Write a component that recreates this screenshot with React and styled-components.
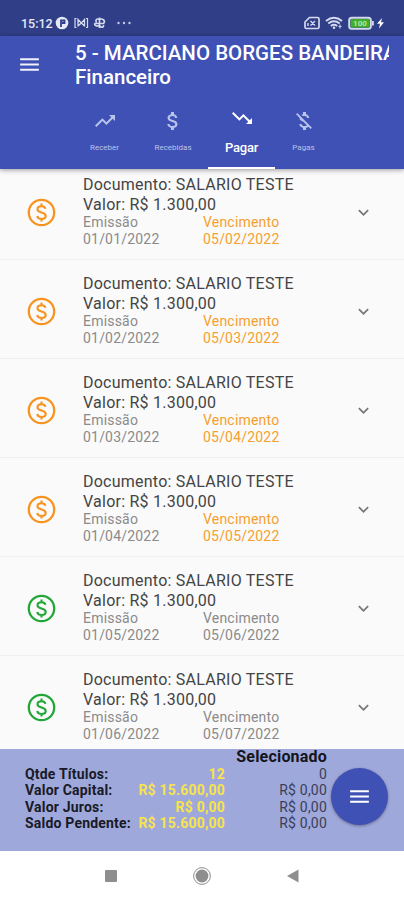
import React from "react"
import styled, { createGlobalStyle } from "styled-components"
import {
  MdAttachMoney,
  MdKeyboardArrowDown,
  MdMenu,
  MdMoneyOff,
  MdTrendingDown,
  MdTrendingUp,
} from "react-icons/md"

const tabs = [
  { label: "Receber", Icon: MdTrendingUp },
  { label: "Recebidas", Icon: MdAttachMoney },
  { label: "Pagar", Icon: MdTrendingDown, active: true },
  { label: "Pagas", Icon: MdMoneyOff },
]

const titulos = [
  { emissao: "01/01/2022", vencimento: "05/02/2022", vencido: true },
  { emissao: "01/02/2022", vencimento: "05/03/2022", vencido: true },
  { emissao: "01/03/2022", vencimento: "05/04/2022", vencido: true },
  { emissao: "01/04/2022", vencimento: "05/05/2022", vencido: true },
  { emissao: "01/05/2022", vencimento: "05/06/2022" },
  { emissao: "01/06/2022", vencimento: "05/07/2022" },
]

const totais = [
  { label: "Qtde Títulos:", total: "12", selecionado: "0" },
  { label: "Valor Capital:", total: "R$ 15.600,00", selecionado: "R$ 0,00" },
  { label: "Valor Juros:", total: "R$ 0,00", selecionado: "R$ 0,00" },
  { label: "Saldo Pendente:", total: "R$ 15.600,00", selecionado: "R$ 0,00" },
]

export default function App() {
  return (
    <Screen>
      <GlobalStyle />
      <StatusBar>
        <StatusGroup>
          <Clock>15:12</Clock>
          <StatusIconsLeft />
        </StatusGroup>
        <StatusIconsRight />
      </StatusBar>
      <Header>
        <TitleRow>
          <MenuButton aria-label="Menu">
            <MdMenu size={25} />
          </MenuButton>
          <Title>
            5 - MARCIANO BORGES BANDEIRA
            <br />
            Financeiro
          </Title>
        </TitleRow>
        <Tabs>
          {tabs.map(({ label, Icon, active }) => (
            <Tab key={label} $active={active}>
              <Icon size={24} />
              <TabLabel $active={active}>{label}</TabLabel>
            </Tab>
          ))}
        </Tabs>
      </Header>
      <List>
        {titulos.map(item => (
          <Row key={item.emissao}>
            <Coin $vencido={item.vencido}>
              <CoinIcon />
            </Coin>
            <Details>
              <Line>Documento: SALARIO TESTE</Line>
              <Line>Valor: R$ 1.300,00</Line>
              <Dates>
                <DateBlock>
                  Emissão
                  <br />
                  {item.emissao}
                </DateBlock>
                <DateBlock $vencido={item.vencido}>
                  Vencimento
                  <br />
                  {item.vencimento}
                </DateBlock>
              </Dates>
            </Details>
            <Expand>
              <MdKeyboardArrowDown size={21} />
            </Expand>
          </Row>
        ))}
      </List>
      <Summary>
        <Totals>
          <SelectedTitle>Selecionado</SelectedTitle>
          {totais.map(item => (
            <React.Fragment key={item.label}>
              <TotalLabel>{item.label}</TotalLabel>
              <TotalValue>{item.total}</TotalValue>
              <SelectedValue>{item.selecionado}</SelectedValue>
            </React.Fragment>
          ))}
        </Totals>
        <Fab aria-label="Opções">
          <MdMenu size={25} />
        </Fab>
      </Summary>
      <NavBar>
        <svg width="14" height="14">
          <rect x="1" y="1" width="12" height="12" rx="1" fill="#8e8e8e" />
        </svg>
        <svg width="20" height="20">
          <circle cx="10" cy="10" r="8.4" fill="none" stroke="#8e8e8e" />
          <circle cx="10" cy="10" r="6.4" fill="#8e8e8e" />
        </svg>
        <svg width="14" height="14">
          <path d="M1 7 12.500 .5V13.500Z" fill="#8e8e8e" />
        </svg>
      </NavBar>
    </Screen>
  )
}

function CoinIcon() {
  return (
    <svg width="33" height="33" fill="none" stroke="currentColor">
      <circle cx="16.500" cy="16.500" r="12.700" strokeWidth="2.300" />
      <path
        d="M20.500 12.800C20 11 18.500 10.200 16.500 10.200C14.200 10.200 12.500 11.200 12.500 13.200C12.500 15.200 14.200 15.900 16.500 16.500C19 17.200 20.700 18 20.700 20C20.700 22 18.900 23 16.600 23C14.200 23 12.600 21.900 12.200 20M16.500 7.500V10.200M16.500 23V25.500"
        strokeWidth="2.100"
      />
    </svg>
  )
}

function StatusIconsLeft() {
  return (
    <svg width="78" height="16" fill="none" stroke="#d5d9ee">
      <circle cx="7" cy="8" r="6.300" fill="#e6e8f6" stroke="none" />
      <path d="M6 12V5.500H9.500V8H7" stroke="#303f8a" strokeWidth="1.800" />
      <path d="M21.500 3.500H20V12.500H21.500M31 3.500H32.500V12.500H31" strokeWidth="1.200" />
      <path d="M23 11.500V4.500L26.300 8 29.500 4.500V11.500M23 11 26.300 8 29.500 11" strokeWidth="1.300" />
      <path
        d="M44.500 2.500V13M44.500 4.500C41.500 3 40 5 41.500 7.500M44.500 4.500C47.500 3 51 5.500 48.500 8.500H39.500M39.500 8.500C39.500 11 42 11.500 44.500 10.500C46 13 49 12.500 48.500 10"
        strokeWidth="1.600"
      />
      <g fill="#c3c9e6" stroke="none">
        <circle cx="63.500" cy="8" r="1.200" />
        <circle cx="69" cy="8" r="1.200" />
        <circle cx="74.500" cy="8" r="1.200" />
      </g>
    </svg>
  )
}

function StatusIconsRight() {
  return (
    <svg width="80" height="16" fill="none">
      <path
        d="M5.500 2.500H13.500Q15 2.500 15 4V12Q15 13.500 13.500 13.500H2.500Q1 13.500 1 12V7Z"
        stroke="#d5d9ee"
        strokeWidth="1.700"
      />
      <path d="M4 8V11M6.500 6 11 10.500M11 6 6.500 10.500" stroke="#d5d9ee" strokeWidth="1.400" />
      <g stroke="#d5d9ee" strokeWidth="1.900">
        <path d="M22 6Q30 -.5 38 6" />
        <path d="M24.300 8.500Q30 4 35.700 8.500" />
        <path d="M26.800 11Q30 8.600 33.200 11" />
      </g>
      <circle cx="30" cy="12.800" r="1.300" fill="#d5d9ee" />
      <path d="M36 9.500V13.500M34.500 11.500H37.500" stroke="#d5d9ee" />
      <rect x="45.200" y="2.700" width="21.600" height="11" rx="2.500" stroke="#d5d9ee" strokeWidth="2" />
      <rect x="46.500" y="4" width="19" height="8.400" rx="1" fill="#3fae2c" />
      <rect x="68" y="6" width="1.800" height="4.500" fill="#d5d9ee" />
      <text x="56" y="11" textAnchor="middle" fill="#b5e5a8" fontSize="8" fontWeight="700">
        100
      </text>
      <path d="M78 3 73 8.800H76L75 13.500 80 7.300H77Z" fill="#fff" />
    </svg>
  )
}

const GlobalStyle = createGlobalStyle`
  * {
    box-sizing: border-box;
  }

  body {
    margin: 0;
    background: #ffffff;
    font-family: Roboto, "Liberation Sans", sans-serif;
  }

  button {
    border: 0;
    padding: 0;
    font: inherit;
  }

  svg {
    display: block;
    flex-shrink: 0;
  }
`

const Screen = styled.div`
  display: flex;
  flex-direction: column;
  width: 404px;
  height: 900px;
  overflow: hidden;
`

const StatusBar = styled.div`
  display: flex;
  justify-content: space-between;
  height: 36px;
  flex-shrink: 0;
  padding: 15px 20px 0 21px;
  background: #303e87;
  color: #e6e8f6;
`

const StatusGroup = styled.div`
  display: flex;
  gap: 2px;
`

const Clock = styled.span`
  width: 32px;
  font-size: 12.5px;
  font-weight: 500;
  line-height: 17px;
  white-space: nowrap;
`

const Header = styled.header`
  display: flex;
  flex-direction: column;
  justify-content: space-between;
  height: 133px;
  flex-shrink: 0;
  background: #3f51b5;
  color: #ffffff;
  box-shadow: 0 1px 5px rgba(0, 0, 0, 0.4);
  z-index: 1;
`

const TitleRow = styled.div`
  display: flex;
  padding: 5px 15px 0 17px;
`

const MenuButton = styled.button`
  width: 58px;
  height: 26px;
  flex-shrink: 0;
  margin-top: 10px;
  background: none;
  color: #f0f1fa;
`

const Title = styled.h1`
  flex: 1;
  min-width: 0;
  margin: 0;
  overflow: hidden;
  font-size: 20.5px;
  font-weight: 500;
  line-height: 24px;
  white-space: nowrap;
`

const Tabs = styled.nav`
  display: grid;
  grid-template-columns: 67px 70px 67px 57px;
  height: 67px;
  margin-left: 71px;
`

const Tab = styled.div`
  display: flex;
  flex-direction: column;
  align-items: center;
  padding-top: ${({ $active }) => ($active ? "4px" : "7px")};
  border-bottom: 2px solid ${({ $active }) => ($active ? "#ffffff" : "transparent")};
  color: ${({ $active }) => ($active ? "#ffffff" : "#b9c4ea")};
`

const TabLabel = styled.span`
  margin-top: ${({ $active }) => ($active ? "8px" : "5px")};
  font-size: ${({ $active }) => ($active ? "13px" : "8px")};
  font-weight: ${({ $active }) => ($active ? 500 : 400)};
  letter-spacing: ${({ $active }) => ($active ? "-0.2px" : "0")};
  line-height: 20px;
`

const List = styled.main`
  display: flex;
  flex-direction: column;
  justify-content: flex-end;
  height: 580px;
  flex-shrink: 0;
  overflow: hidden;
  background: #fafafa;
`

const Row = styled.article`
  display: flex;
  height: 99px;
  flex-shrink: 0;
  padding: 14px 30px 0 25px;
  border-bottom: 1px solid #efefef;

  &:last-child {
    height: 93px;
    border-bottom: 0;
  }
`

const Coin = styled.div`
  width: 58px;
  padding-top: 21px;
  color: ${({ $vencido }) => ($vencido ? "#f7931e" : "#22a637")};
`

const Details = styled.div`
  flex: 1;
`

const Line = styled.div`
  color: #444444;
  font-size: 16px;
  letter-spacing: 0.24px;
  line-height: 19.5px;
`

const Dates = styled.div`
  display: flex;
`

const DateBlock = styled.div`
  width: 120px;
  color: ${({ $vencido }) => ($vencido ? "#f5a02e" : "#8a8a8a")};
  font-size: 14px;
  letter-spacing: 0.2px;
  line-height: 16.5px;
`

const Expand = styled.div`
  padding-top: 27px;
  color: #777777;
`

const Summary = styled.footer`
  display: flex;
  height: 102px;
  flex-shrink: 0;
  padding-left: 25px;
  background: #9fa8da;
`

const Totals = styled.div`
  display: grid;
  grid-template-columns: 108px 92px 102px;
  grid-auto-rows: 16.5px;
  align-content: start;
  width: 302px;
  font-size: 14px;
  letter-spacing: 0.2px;
  line-height: 16.5px;
  white-space: nowrap;
`

const SelectedTitle = styled.strong`
  grid-column: 1 / -1;
  color: #14151c;
  font-size: 16px;
  font-weight: 700;
  text-align: right;
`

const TotalLabel = styled.span`
  color: #181a27;
  font-weight: 700;
`

const TotalValue = styled.span`
  color: #f7e34f;
  font-weight: 700;
  text-align: right;
`

const SelectedValue = styled.span`
  color: #3a3e58;
  text-align: right;
`

const Fab = styled.button`
  display: flex;
  align-items: center;
  justify-content: center;
  width: 57px;
  height: 57px;
  margin: 19px 0 0 4px;
  border-radius: 50%;
  background: #3f51b5;
  color: #ffffff;
  box-shadow: 0 1px 3px rgba(0, 0, 0, 0.35);
`

const NavBar = styled.div`
  display: flex;
  align-items: center;
  justify-content: center;
  gap: 74px;
  height: 49px;
  background: #ffffff;
`
